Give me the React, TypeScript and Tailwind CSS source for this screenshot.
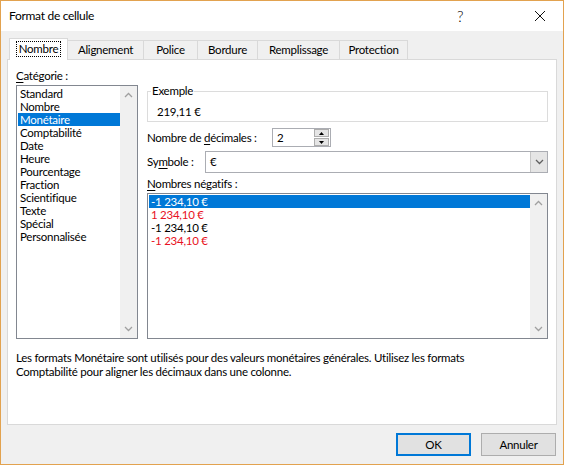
import React from "react";

const font = { fontFamily: '"Segoe UI", Lato, "Noto Sans", sans-serif' };

function ChevUp({ c = "#a0a0a0" }: { c?: string }) {
  return (
    <svg width="9" height="6" viewBox="0 0 9 6">
      <path d="M1 5 L4.5 1.5 L8 5" stroke={c} strokeWidth="1.3" fill="none" />
    </svg>
  );
}
function ChevDown({ c = "#a0a0a0" }: { c?: string }) {
  return (
    <svg width="9" height="6" viewBox="0 0 9 6">
      <path d="M1 1 L4.5 4.5 L8 1" stroke={c} strokeWidth="1.3" fill="none" />
    </svg>
  );
}

function Scrollbar() {
  return (
    <div className="w-[17px] h-full bg-[#f0f0f0] flex flex-col justify-between items-center py-[6px]">
      <ChevUp />
      <ChevDown />
    </div>
  );
}

const categories = [
  "Standard",
  "Nombre",
  "Monétaire",
  "Comptabilité",
  "Date",
  "Heure",
  "Pourcentage",
  "Fraction",
  "Scientifique",
  "Texte",
  "Spécial",
  "Personnalisée",
];

const tabs = ["Alignement", "Police", "Bordure", "Remplissage", "Protection"];
const tabW = [76, 54, 60, 82, 68];

export default function App() {
  return (
    <div
      className="w-[564px] h-[465px] border border-[#e2a24f] flex flex-col text-[11.5px] tracking-[-0.25px] text-black bg-[#f0f0f0] overflow-hidden"
      style={font}
    >
      {/* Title bar */}
      <div className="h-[30px] bg-white flex items-center pl-[8px] shrink-0">
        <span className="text-[12px] tracking-[-0.3px]">Format de cellule</span>
        <div className="flex-1" />
        <span className="text-[15px] w-[20px] text-center mr-[64px] leading-none font-light">?</span>
        <svg width="12" height="12" viewBox="0 0 12 12" className="mr-[17px]">
          <path d="M1 1 L11 11 M11 1 L1 11" stroke="#111" strokeWidth="1" />
        </svg>
      </div>

      {/* Body */}
      <div className="flex-1 flex flex-col pt-[7px] px-[6px]">
        {/* Tabs */}
        <div className="flex items-end h-[21px] pl-[2px] relative z-10">
          <div className="w-[59px] h-[22px] bg-white border border-[#d9d9d9] border-b-0 flex items-center justify-center mb-[-1px] pb-[1px]">
            <span className="border border-dotted border-black px-[2px] leading-[14px]">Nombre</span>
          </div>
          {tabs.map((t, i) => (
            <div
              key={t}
              style={{ width: tabW[i] }}
              className="h-[19px] bg-[#f0f0f0] border border-[#d9d9d9] border-l-0 border-b-0 flex items-center justify-center"
            >
              {t}
            </div>
          ))}
        </div>

        {/* Tab page */}
        <div className="w-[550px] h-[366px] bg-white border border-[#d9d9d9] flex flex-col pl-[8px]">
          <div className="flex gap-[9px]">
            {/* Left column */}
            <div className="w-[122px] flex flex-col pt-[8px]">
              <div className="h-[15px] leading-[15px]">
                <span className="underline underline-offset-2">C</span>atégorie :
              </div>
              <div className="mt-[2px] h-[254px] border border-[#828790] flex">
                <div className="flex-1 pt-[1px] pl-[1px]">
                  {categories.map((c) => (
                    <div
                      key={c}
                      className={
                        "h-[13px] leading-[13px] pl-[2px] " +
                        (c === "Monétaire" ? "bg-[#0078d7] text-white" : "")
                      }
                    >
                      {c}
                    </div>
                  ))}
                </div>
                <Scrollbar />
              </div>
            </div>

            {/* Right column */}
            <div className="w-[401px] flex flex-col">
              {/* Exemple group */}
              <div className="mt-[31px] h-[31px] border border-[#dcdcdc] relative">
                <span className="absolute -top-[8px] left-[3px] bg-white px-[1px] leading-[14px]">
                  Exemple
                </span>
                <div className="pl-[9px] pt-[13px] leading-[14px]">219,11 €</div>
              </div>

              {/* Décimales */}
              <div className="mt-[6px] h-[19px] flex items-center">
                <span className="w-[125px]">
                  Nombre de <span className="underline underline-offset-2">d</span>écimales :
                </span>
                <div className="w-[59px] h-[19px] border border-[#abadb3] flex items-center">
                  <span className="flex-1 pl-[4px] leading-[14px]">2</span>
                  <div className="w-[15px] h-[17px] flex flex-col mr-[1px]">
                    <div className="h-[8px] border border-[#adadad] bg-[#e5e5e5] flex items-center justify-center">
                      <svg width="5" height="3" viewBox="0 0 5 3"><path d="M0 3 L2.5 0 L5 3Z" fill="#000" /></svg>
                    </div>
                    <div className="h-[8px] mt-[1px] border border-[#adadad] bg-[#e5e5e5] flex items-center justify-center">
                      <svg width="5" height="3" viewBox="0 0 5 3"><path d="M0 0 L2.5 3 L5 0Z" fill="#000" /></svg>
                    </div>
                  </div>
                </div>
              </div>

              {/* Symbole */}
              <div className="mt-[4px] h-[22px] flex items-center">
                <span className="w-[58px]">
                  Sy<span className="underline underline-offset-2">m</span>bole :
                </span>
                <div className="flex-1 h-[22px] border border-[#abadb3] flex items-center">
                  <span className="flex-1 pl-[4px]">€</span>
                  <div className="w-[17px] h-[20px] bg-[#e5e5e5] border-l border-[#c5c5c5] flex items-center justify-center">
                    <ChevDown c="#606060" />
                  </div>
                </div>
              </div>

              {/* Nombres négatifs */}
              <div className="mt-[3px] h-[15px] leading-[15px]">
                <span className="underline underline-offset-2">N</span>ombres négatifs :
              </div>
              <div className="mt-[2px] h-[146px] border border-[#828790] flex">
                <div className="flex-1 pt-[1px] pl-[1px]">
                  <div className="h-[13px] leading-[13px] pl-[2px] bg-[#0078d7] text-white">-1 234,10 €</div>
                  <div className="h-[13px] leading-[13px] pl-[2px] text-[#e81123]">1 234,10 €</div>
                  <div className="h-[13px] leading-[13px] pl-[2px]">-1 234,10 €</div>
                  <div className="h-[13px] leading-[13px] pl-[2px] text-[#e81123]">-1 234,10 €</div>
                </div>
                <Scrollbar />
              </div>
            </div>
          </div>

          {/* Description */}
          <div className="mt-[12px] leading-[14px] w-[500px]">
            Les formats Monétaire sont utilisés pour des valeurs monétaires générales. Utilisez les formats
            <br />
            Comptabilité pour aligner les décimaux dans une colonne.
          </div>
        </div>

        {/* Buttons */}
        <div className="flex justify-end gap-[10px] pt-[8px] pr-[1px]">
          <button className="w-[75px] h-[23px] border-2 border-[#0078d7] bg-[#e1e1e1] leading-none">OK</button>
          <button className="w-[75px] h-[23px] border border-[#adadad] bg-[#e1e1e1] leading-none">Annuler</button>
        </div>
      </div>
    </div>
  );
}
